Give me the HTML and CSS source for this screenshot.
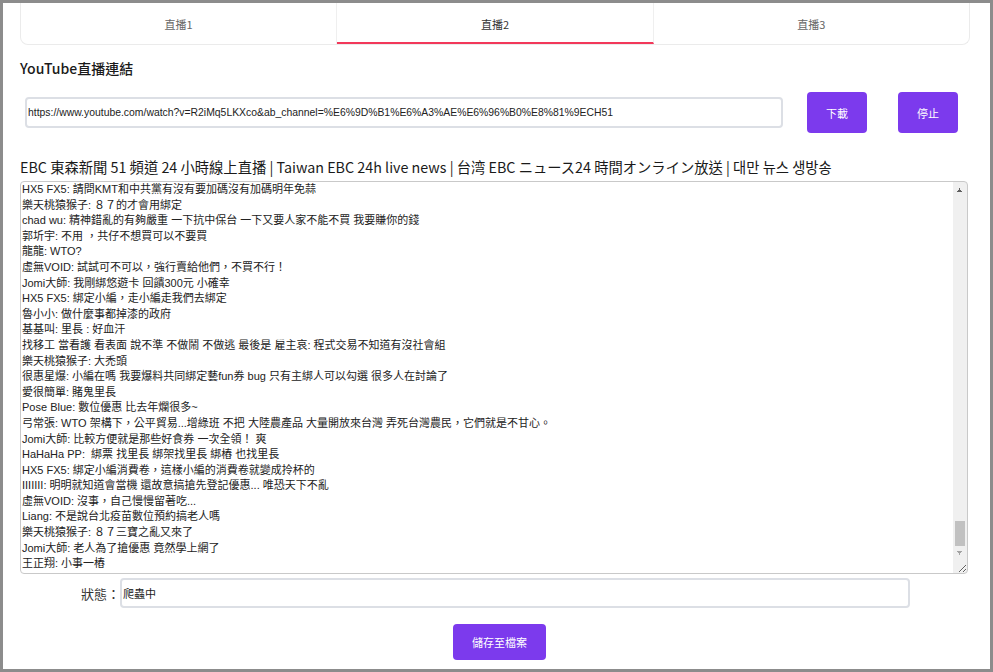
FILE: index.html
```html
<!DOCTYPE html>
<html lang="zh-Hant">
<head>
<meta charset="utf-8">
<title>YouTube直播</title>
<link rel="stylesheet" href="styles.css">
</head>
<body>
<div class="frame">
  <nav class="tabs">
    <div class="tab">直播1</div>
    <div class="tab active">直播2</div>
    <div class="tab">直播3</div>
  </nav>
  <div class="label-title">YouTube直播連結</div>
  <div class="url-row">
    <input class="url-input" type="text" value="https://www.youtube.com/watch?v=R2iMq5LKXco&amp;ab_channel=%E6%9D%B1%E6%A3%AE%E6%96%B0%E8%81%9ECH51">
    <button class="btn btn-download">下載</button>
    <button class="btn btn-stop">停止</button>
  </div>
  <h2 class="video-title">EBC 東森新聞 51 頻道 24 小時線上直播 | Taiwan EBC 24h live news | 台湾 EBC ニュース24 時間オンライン放送 | 대만 뉴스 생방송</h2>
  <textarea class="chat">HX5 FX5: 請問KMT和中共黨有沒有要加碼沒有加碼明年免蒜
樂天桃猿猴子: ８７的才會用綁定
chad wu: 精神錯亂的有夠嚴重 一下抗中保台 一下又要人家不能不買 我要賺你的錢
郭圻宇: 不用 ，共仔不想買可以不要買
龍龍: WTO?
虛無VOID: 試試可不可以，強行賣給他們，不買不行！
Jomi大師: 我剛綁悠遊卡 回饋300元 小確幸
HX5 FX5: 綁定小編，走小編走我們去綁定
魯小小: 做什麼事都掉漆的政府
基基叫: 里長 : 好血汗
找移工 當看護 看表面 說不準 不做鬧 不做逃 最後是 雇主哀: 程式交易不知道有沒社會組
樂天桃猿猴子: 大禿頭
很惠星爆: 小編在嗎 我要爆料共同綁定藝fun券 bug 只有主綁人可以勾選 很多人在討論了
愛很簡單: 賭鬼里長
Pose Blue: 數位優惠 比去年爛很多~
弓常張: WTO 架構下，公平貿易...增綠班 不把 大陸農產品 大量開放來台灣 弄死台灣農民，它們就是不甘心。
Jomi大師: 比較方便就是那些好食券 一次全領！ 爽
HaHaHa PP:  綁票 找里長 綁架找里長 綁樁 也找里長
HX5 FX5: 綁定小編消費卷，這樣小編的消費卷就變成拎杯的
IIIIIII: 明明就知道會當機 還故意搞搶先登記優惠... 唯恐天下不亂
虛無VOID: 沒事，自己慢慢留著吃...
Liang: 不是說台北疫苗數位預約搞老人嗎
樂天桃猿猴子: ８７三寶之亂又來了
Jomi大師: 老人為了搶優惠 竟然學上網了
王正翔: 小事一樁</textarea>
  <div class="status-row">
    <label class="status-label" for="status">狀態：</label>
    <input id="status" class="status-input" type="text" value="爬蟲中">
  </div>
  <div class="save-row">
    <button class="btn btn-save">儲存至檔案</button>
  </div>
</div>
</body>
</html>
```
FILE: styles.css
```css
html, body {
  margin: 0;
  padding: 0;
  background: #ffffff;
}

body {
  font-family: "Noto Sans CJK TC", "Noto Sans", sans-serif;
  color: #222222;
}

.frame {
  box-sizing: border-box;
  width: 993px;
  height: 672px;
  border: 3px solid #8c8c8c;
  padding: 0 20px 0 17px;
  overflow: hidden;
}

.tabs {
  display: flex;
  height: 42px;
  border: 1px solid #ebebeb;
  border-top: none;
  border-radius: 0 0 8px 8px;
  box-sizing: border-box;
}

.tab {
  flex: 1;
  display: flex;
  align-items: center;
  justify-content: center;
  font-size: 11px;
  color: #666666;
  border-right: 1px solid #efefef;
  box-sizing: border-box;
}

.tab:last-child {
  border-right: none;
}

.tab.active {
  color: #333333;
  border-bottom: 2px solid #f2385a;
  padding-top: 2px;
}

.label-title {
  margin-top: 13px;
  font-size: 14px;
  line-height: 20px;
  color: #1a1a1a;
  font-weight: 500;
}

.url-row {
  display: flex;
  align-items: center;
  margin-top: 14px;
  padding-left: 5px;
}

.url-input {
  box-sizing: border-box;
  width: 758px;
  height: 31px;
  border: 2px solid #dcdfe5;
  border-radius: 4px;
  padding: 0 1px;
  font-family: "Liberation Sans", "Noto Sans CJK TC", sans-serif;
  font-size: 10.4px;
  color: #222222;
  outline: none;
}

.btn {
  border: none;
  border-radius: 4px;
  background: #7c3aed;
  color: #ffffff;
  font-family: "Noto Sans CJK TC", "Noto Sans", sans-serif;
  font-size: 11px;
  cursor: pointer;
  padding: 0;
}

.btn-download {
  width: 60px;
  height: 41px;
  margin-left: 24px;
}

.btn-stop {
  width: 60px;
  height: 41px;
  margin-left: 31px;
}

.video-title {
  margin: 23px 0 0 0;
  font-size: 14.3px;
  line-height: 22px;
  font-weight: 400;
  color: #1a1a1a;
  white-space: nowrap;
}

.chat {
  display: block;
  box-sizing: border-box;
  width: 948px;
  height: 393px;
  margin-top: 3px;
  border: 1px solid #c9c9c9;
  border-radius: 4px;
  padding: 0 16px 0 1px;
  font-family: "Liberation Sans", "Noto Sans CJK TC", sans-serif;
  font-size: 11px;
  line-height: 15.6px;
  color: #222222;
  overflow-y: scroll;
  resize: both;
  outline: none;
  background-color: #ffffff;
  background-image:
    conic-gradient(from 150deg at 50% 0, #606060 0deg 60deg, transparent 60deg),
    conic-gradient(from -30deg at 50% 100%, #a3a3a3 0deg 60deg, transparent 60deg),
    linear-gradient(#c1c1c1, #c1c1c1),
    linear-gradient(#f0f0f0, #f0f0f0);
  background-repeat: no-repeat;
  background-size: 7px 4px, 7px 4px, 10px 25px, 14px 100%;
  background-position: right 4px top 6px, right 4px bottom 18px, right 2px top 339px, right 0 top 0;
}

.status-row {
  display: flex;
  align-items: center;
  margin-top: 4px;
}

.status-label {
  width: 100px;
  text-align: right;
  font-size: 13px;
  color: #333333;
}

.status-input {
  box-sizing: border-box;
  width: 790px;
  height: 30px;
  border: 2px solid #dcdfe5;
  border-radius: 4px;
  padding: 0 1px;
  font-family: "Noto Sans CJK TC", "Noto Sans", sans-serif;
  font-size: 11px;
  color: #222222;
  outline: none;
}

.save-row {
  display: flex;
  justify-content: center;
  margin-top: 16px;
}

.btn-save {
  width: 93px;
  height: 36px;
  margin-left: 9px;
  font-size: 11px;
}
```
